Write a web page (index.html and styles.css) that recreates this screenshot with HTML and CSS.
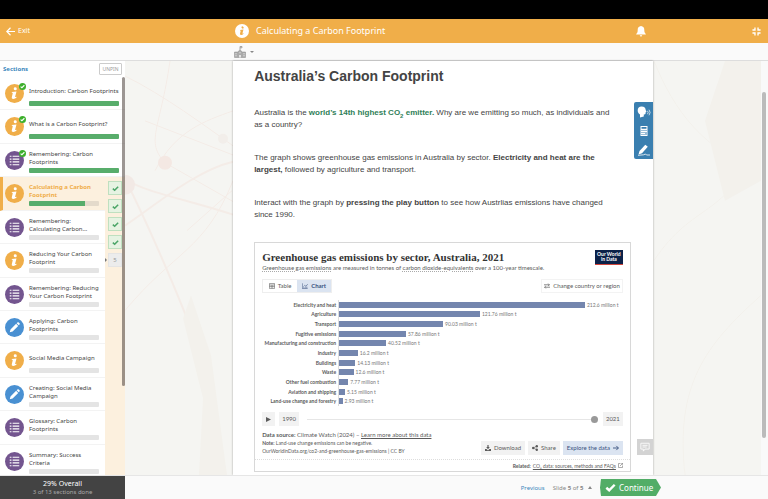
FILE: index.html
```html
<!DOCTYPE html>
<html lang="en">
<head>
    <meta charset="UTF-8">
    <title>Calculating a Carbon Footprint</title>
    <link rel="stylesheet" href="styles.css">
</head>
<body>
    <!-- shared icons -->
    <svg class="sprite" aria-hidden="true">
        <symbol id="info" viewBox="0 0 20 20">
            <path fill="currentColor" d="M9.2 4.800a1.600 1.600 0 1 1 3.200.4 1.600 1.600 0 0 1-3.200-.4zM7.200 8.400l4.900-.6-1.400 5.400c-.2.8.4.7 1.300.1l.3.7c-1.200 1.200-2.300 1.700-3.500 1.700-1.500 0-1.900-.9-1.600-2.100l.9-3.700c.1-.5 0-.6-1-.7z"/>
        </symbol>
        <symbol id="list" viewBox="0 0 20 20">
            <path fill="none" stroke="currentColor" stroke-width="1.200" d="M5 5.500h1.800M8 5.500h7M5 8.500h1.800M8 8.500h7M5 11.500h1.800M8 11.500h7M5 14.500h1.800M8 14.500h7"/>
        </symbol>
        <symbol id="pencil" viewBox="0 0 20 20">
            <path fill="currentColor" d="M5 15l.8-3 5.900-5.900 2.200 2.200L8 14.200zM12.300 5.500l.8-.8c.4-.4.900-.4 1.300 0l.9.9c.4.4.4.900 0 1.300l-.8.8z"/>
        </symbol>
        <symbol id="tick" viewBox="0 0 10 10">
            <path fill="none" stroke="currentColor" stroke-width="2.200" d="M1.200 5.200l2.600 2.300L8.800 2.500"/>
        </symbol>
    </svg>

    <div class="top-strip"></div>

    <header class="title-bar">
        <a class="exit" href="#">
            <svg viewBox="0 0 10 10"><path fill="none" stroke="currentColor" stroke-width="1.300" d="M10 5H1M5 .8L.9 5 5 9.200"/></svg>
            Exit
        </a>
        <span class="title-icon"><svg><use href="#info"/></svg></span>
        <span class="title">Calculating a Carbon Footprint</span>
        <button class="icon-button bell" aria-label="Notifications">
            <svg viewBox="0 0 10 12"><path fill="currentColor" d="M4.300 1.300a.8.8 0 0 1 1.400 0C7.600 1.700 8.300 3 8.300 5c0 2.500.5 3 1.500 4v.6H.2V9c1-1 1.500-1.500 1.500-4 0-2 .7-3.300 2.600-3.700zM3.800 10.200h2.400a1.200 1.200 0 0 1-2.400 0z"/></svg>
        </button>
        <button class="icon-button" aria-label="Exit full screen">
            <svg viewBox="0 0 10 10"><path fill="none" stroke="currentColor" stroke-width="1.500" d="M3.300.5v2.800H.5M6.700.5v2.800h2.800M3.300 9.500V6.700H.5M6.700 9.500V6.700h2.800"/></svg>
        </button>
    </header>

    <div class="tool-bar">
        <button class="school-button" aria-label="School">
            <svg viewBox="0 0 12 12"><path fill="#aaa" stroke="#888" stroke-width=".5" d="M.5 6h3L6 4l2.500 2h3v5.500h-11z"/><path fill="none" stroke="#888" stroke-width=".7" d="M6 4V.5h2v1.300H6"/><path fill="#f2f2f2" d="M5.200 9h1.600v2.500H5.200zM1.500 7.200h1v1h-1zM1.500 9.200h1v1h-1zM9.500 7.200h1v1h-1zM9.500 9.200h1v1h-1zM5.500 6.200h1v1h-1z"/></svg>
            <span class="caret"></span>
        </button>
    </div>

    <div class="workspace">
        <nav class="sidebar">
            <div class="sidebar-head">
                <h2>Sections</h2>
                <button class="unpin">UNPIN</button>
            </div>
            <div class="section-list">
                <a class="section wide" href="#">
                    <span class="badge info"><svg><use href="#info"/></svg><span class="done"><svg><use href="#tick"/></svg></span></span>
                    <span class="section-name">Introduction: Carbon Footprints</span>
                    <span class="progress full"></span>
                </a>
                <a class="section wide" href="#">
                    <span class="badge info"><svg><use href="#info"/></svg><span class="done"><svg><use href="#tick"/></svg></span></span>
                    <span class="section-name">What is a Carbon Footprint?</span>
                    <span class="progress full"></span>
                </a>
                <a class="section wide" href="#">
                    <span class="badge list"><svg><use href="#list"/></svg><span class="done"><svg><use href="#tick"/></svg></span></span>
                    <span class="section-name">Remembering: Carbon<br>Footprints</span>
                    <span class="progress full"></span>
                </a>
                <a class="section active" href="#">
                    <span class="badge info"><svg><use href="#info"/></svg></span>
                    <span class="section-name">Calculating a Carbon<br>Footprint</span>
                    <span class="progress"><span style="width: 80%"></span></span>
                </a>
                <div class="steps">
                    <a class="step" href="#" aria-label="Slide 1"><svg><use href="#tick"/></svg></a>
                    <a class="step" href="#" aria-label="Slide 2"><svg><use href="#tick"/></svg></a>
                    <a class="step" href="#" aria-label="Slide 3"><svg><use href="#tick"/></svg></a>
                    <a class="step" href="#" aria-label="Slide 4"><svg><use href="#tick"/></svg></a>
                    <a class="step current" href="#">5</a>
                </div>
                <a class="section" href="#">
                    <span class="badge list"><svg><use href="#list"/></svg></span>
                    <span class="section-name">Remembering:<br>Calculating Carbon…</span>
                    <span class="progress"></span>
                </a>
                <a class="section" href="#">
                    <span class="badge info"><svg><use href="#info"/></svg></span>
                    <span class="section-name">Reducing Your Carbon<br>Footprint</span>
                    <span class="progress"></span>
                </a>
                <a class="section" href="#">
                    <span class="badge list"><svg><use href="#list"/></svg></span>
                    <span class="section-name">Remembering: Reducing<br>Your Carbon Footprint</span>
                    <span class="progress"></span>
                </a>
                <a class="section" href="#">
                    <span class="badge pencil"><svg><use href="#pencil"/></svg></span>
                    <span class="section-name">Applying: Carbon<br>Footprints</span>
                    <span class="progress"></span>
                </a>
                <a class="section" href="#">
                    <span class="badge info"><svg><use href="#info"/></svg></span>
                    <span class="section-name">Social Media Campaign</span>
                    <span class="progress"></span>
                </a>
                <a class="section" href="#">
                    <span class="badge pencil"><svg><use href="#pencil"/></svg></span>
                    <span class="section-name">Creating: Social Media<br>Campaign</span>
                    <span class="progress"></span>
                </a>
                <a class="section" href="#">
                    <span class="badge list"><svg><use href="#list"/></svg></span>
                    <span class="section-name">Glossary: Carbon<br>Footprints</span>
                    <span class="progress"></span>
                </a>
                <a class="section" href="#">
                    <span class="badge list"><svg><use href="#list"/></svg></span>
                    <span class="section-name">Summary: Success<br>Criteria</span>
                    <span class="progress"></span>
                </a>
                <div class="list-scroll"></div>
            </div>
        </nav>

        <main class="stage">
            <svg class="backdrop" viewBox="0 0 643 415" preserveAspectRatio="none" aria-hidden="true">
                <g fill="none" stroke="#f4ece7">
                    <path stroke-width="2" d="M0 118c20 14 60 20 108 36M0 165c30-20 70-55 108-64M0 118c25 50 50 110 62 140"/>
                    <path d="M0 15c40 20 80 50 108 70M45 0c-10 70-25 80-5 102l70 40M20 60l90 35M0 250c50-60 80-60 108-130M62 170l45-40M30 110c20-40 50-50 78-60"/>
                </g>
                <path fill="none" stroke="#f3f1ec" d="M529 0c20 50 50 90 107 110M529 200c40-60 70-40 107-120M560 415c-10-90 20-130 76-180"/>
                <path fill="#f3f1ec" d="M58 258l20 80-4 77h28l-16-120-20-60zM600 0l-20 60 20 80 36-20V0z"/>
                <circle cx="0" cy="124" r="10" fill="#f2e9e5"/>
                <circle cx="40" cy="102" r="7" fill="#f4e8e3"/>
                <circle cx="98" cy="78" r="5" fill="#f2eeea"/>
            </svg>

            <article class="paper">
                <h1>Australia’s Carbon Footprint</h1>
                <p>Australia is the <strong class="green">world’s 14th highest CO<sub>2</sub> emitter.</strong> Why are we emitting so much, as individuals and as a country?</p>
                <p>The graph shows greenhouse gas emissions in Australia by sector. <strong>Electricity and heat are the largest,</strong> followed by agriculture and transport.</p>
                <p>Interact with the graph by <strong>pressing the play button</strong> to see how Austrlias emissions have changed since 1990.</p>

                <section class="chart">
                    <div class="chart-head">
                        <div>
                            <h2>Greenhouse gas emissions by sector, Australia, 2021</h2>
                            <div class="subtitle"><a href="#">Greenhouse gas emissions</a> are measured in tonnes of <a href="#">carbon dioxide-equivalents</a> over a 100-year timescale.</div>
                        </div>
                        <div class="owid">Our World<br>in Data</div>
                    </div>

                    <div class="chart-controls">
                        <div class="tabs">
                            <button><svg viewBox="0 0 10 10"><path fill="none" stroke="currentColor" d="M.5 1h9v8h-9zM.5 3.500h9M.5 6h9M5 3.500V9"/></svg>Table</button>
                            <button class="selected"><svg viewBox="0 0 10 10"><path fill="none" stroke="currentColor" d="M.5.5v9h9M2.500 6l2-2 2 1.500 3-3.500M3 9V7M5.500 9V7M8 9V6"/></svg>Chart</button>
                        </div>
                        <button class="region"><svg viewBox="0 0 10 10"><path fill="none" stroke="currentColor" stroke-width="1.200" d="M0 3h9M7 1l2 2-2 2M10 7H1M3 5L1 7l2 2"/></svg>Change country or region</button>
                    </div>

                    <div class="bars">
                        <div class="label">Electricity and heat</div><div class="track"><span class="bar" style="width: 100%"></span>212.6 million t</div>
                        <div class="label">Agriculture</div><div class="track"><span class="bar" style="width: 57.300%"></span>121.76 million t</div>
                        <div class="label">Transport</div><div class="track"><span class="bar" style="width: 42.300%"></span>90.03 million t</div>
                        <div class="label">Fugitive emissions</div><div class="track"><span class="bar" style="width: 27.200%"></span>57.86 million t</div>
                        <div class="label">Manufacturing and construction</div><div class="track"><span class="bar" style="width: 19.100%"></span>40.52 million t</div>
                        <div class="label">Industry</div><div class="track"><span class="bar" style="width: 7.600%"></span>16.2 million t</div>
                        <div class="label">Buildings</div><div class="track"><span class="bar" style="width: 6.600%"></span>14.13 million t</div>
                        <div class="label">Waste</div><div class="track"><span class="bar" style="width: 5.900%"></span>12.6 million t</div>
                        <div class="label">Other fuel combustion</div><div class="track"><span class="bar" style="width: 3.700%"></span>7.77 million t</div>
                        <div class="label">Aviation and shipping</div><div class="track"><span class="bar" style="width: 2.400%"></span>5.15 million t</div>
                        <div class="label">Land-use change and forestry</div><div class="track"><span class="bar" style="width: 1.400%"></span>2.93 million t</div>
                    </div>

                    <div class="timeline">
                        <button aria-label="Play"><svg viewBox="0 0 10 10"><path fill="currentColor" d="M0 0l10 5-10 5z"/></svg></button>
                        <span class="year">1990</span>
                        <input type="range" min="1990" max="2021" value="2021" aria-label="Year">
                        <span class="year">2021</span>
                    </div>

                    <div class="chart-foot">
                        <div class="source">
                            <b>Data source:</b> Climate Watch (2024) – <a href="#">Learn more about this data</a><br>
                            <small><b>Note:</b> Land-use change emissions can be negative.<br>
                            OurWorldinData.org/co2-and-greenhouse-gas-emissions | CC BY</small>
                        </div>
                        <div class="actions">
                            <button><svg viewBox="0 0 10 10"><path fill="currentColor" d="M4 0h2v3.500h2L5 7 2 3.500h2zM0 6.500h2.500L5 9l2.500-2.500H10V10H0z"/></svg>Download</button>
                            <button><svg viewBox="0 0 10 10"><path stroke="currentColor" fill="none" d="M8 2L2 5l6 3"/><g fill="currentColor"><circle cx="8" cy="2" r="2"/><circle cx="2" cy="5" r="2"/><circle cx="8" cy="8" r="2"/></g></svg>Share</button>
                            <button class="explore">Explore the data<svg viewBox="0 0 10 10"><path fill="none" stroke="currentColor" stroke-width="1.500" d="M0 5h9M5.500 1.500L9 5 5.500 8.500"/></svg></button>
                        </div>
                    </div>

                    <div class="related"><b>Related:</b> <a href="#">CO₂ data: sources, methods and FAQs</a> <svg viewBox="0 0 10 10"><path fill="none" stroke="currentColor" d="M5 1H1v8h8V5M4 6l5-5M6 .5h3.500V4"/></svg></div>
                </section>

                <div class="side-tools">
                    <button aria-label="Read aloud"><svg viewBox="0 0 14 12"><path fill="currentColor" d="M4.500.5c3 0 4.200 1.700 4.200 3.500l.8 2-.9.300c.1 1.700-.2 2.300-1.800 2.100v2.100L3 11.500V8.400C1.500 7.500.7 6 .7 4.400.7 2.200 2.200.5 4.500.5z"/><path fill="none" stroke="currentColor" stroke-width=".7" d="M10.500 4.800q1.300 1.700 0 3.400M12 3.700q2.200 2.800 0 5.600"/></svg></button>
                    <button aria-label="Calculator"><svg viewBox="0 0 14 12"><path fill="currentColor" d="M3.500 1h7v10h-7z"/><path fill="#3a7fb0" d="M4.500 2h5v1.800h-5zM4.500 5h1v1h-1zM6.500 5h1v1h-1zM8.500 5h1v1h-1zM4.500 7h1v1h-1zM6.500 7h1v1h-1zM8.500 7h1v3h-1zM4.500 9h1v1h-1zM6.500 9h1v1h-1z"/></svg></button>
                    <button aria-label="Annotate"><svg viewBox="0 0 14 12"><path fill="currentColor" d="M1.500 10.500l1-3.500L8.300.8l2.500 2L5 9.300z"/><path fill="none" stroke="currentColor" stroke-width=".8" d="M1 11.300l5.500-.5 2-.8 1 1h3.500"/></svg></button>
                </div>
                <button class="comment" aria-label="Comments"><svg viewBox="0 0 12 12"><path fill="none" stroke="currentColor" d="M1 1.500h10v7H6L4 11V8.500H1z"/><path stroke="currentColor" d="M3 4h6M3 6h5"/></svg></button>
            </article>
            <div class="page-scroll"></div>
        </main>
    </div>

    <footer class="bottom-bar">
        <div class="overall">
            <strong>29% Overall</strong>
            <span>3 of 13 sections done</span>
        </div>
        <div class="pager">
            <a href="#">Previous</a>
            <button class="slide-menu">Slide <b>5</b> of <b>5</b> <span class="caret up"></span></button>
            <button class="continue"><svg><use href="#tick"/></svg>Continue</button>
        </div>
    </footer>
</body>
</html>
```
FILE: styles.css
```css
* {
    box-sizing: border-box;
}
body {
    margin: 0;
    height: 100vh;
    display: flex;
    flex-direction: column;
    overflow: hidden;
    font-family: "Noto Sans", "Open Sans", sans-serif;
    font-size: 6px;
    line-height: 8px;
    color: #444;
    background: #fafafa;
}
h1, h2, p {
    margin: 0;
}
a {
    color: inherit;
    text-decoration: none;
}
button {
    margin: 0;
    padding: 0;
    border: none;
    background: transparent;
    font: inherit;
    color: inherit;
    cursor: pointer;
}
svg {
    display: block;
    flex: none;
}
.sprite {
    position: absolute;
    width: 0;
    height: 0;
}

/* bars on top */
.top-strip {
    flex: none;
    height: 19px;
    background: #000;
}
.title-bar {
    flex: none;
    height: 24px;
    display: flex;
    align-items: center;
    padding: 0 7px 0 6px;
    background: #f0ae49;
    color: #fff;
}
.exit {
    width: 229px;
    display: flex;
    align-items: center;
    gap: 3px;
    font-size: 7px;
}
.exit svg {
    width: 9px;
    height: 9px;
}
.title-icon {
    width: 14px;
    height: 14px;
    border-radius: 50%;
    background: #fff;
    color: #f0ae49;
}
.title-icon svg {
    width: 14px;
    height: 14px;
}
.title {
    flex: 1;
    margin-left: 7px;
    font-size: 9px;
}
.icon-button svg {
    width: 9px;
    height: 9px;
}
.bell {
    margin-right: 106px;
}
.bell svg {
    width: 10px;
    height: 12px;
}
.tool-bar {
    flex: none;
    height: 18px;
    display: flex;
    align-items: center;
    padding-left: 234px;
    background: #fafafa;
    border-bottom: 1px solid #ddd;
}
.school-button {
    display: flex;
    align-items: center;
    gap: 4px;
}
.school-button svg {
    width: 12px;
    height: 12px;
}
.caret {
    border: 2px solid transparent;
    border-top-color: #888;
    border-bottom: none;
}
.caret.up {
    display: inline-block;
    margin: 0 0 1px 3px;
    border-top: none;
    border-bottom: 3px solid #888;
}

/* sections */
.workspace {
    flex: 1;
    min-height: 0;
    display: flex;
}
.sidebar {
    flex: none;
    width: 125px;
    display: flex;
    flex-direction: column;
    background: #fff;
}
.sidebar-head {
    height: 16px;
    display: flex;
    align-items: center;
    justify-content: space-between;
    padding: 0 3px;
}
.sidebar-head h2 {
    font-size: 6px;
    color: #3a87bd;
}
.unpin {
    width: 23px;
    height: 12px;
    border: 1px solid #ccc;
    border-radius: 1px;
    font-size: 5px;
    color: #999;
}
.section-list {
    position: relative;
    flex: 1;
    margin-bottom: -3px;
    display: grid;
    grid-template-columns: 1fr 20px;
    grid-template-rows: repeat(12, 1fr);
}
.section {
    grid-column: 1;
    min-height: 0;
    display: grid;
    grid-template-columns: 19px 1fr;
    grid-template-rows: 20px 5px;
    column-gap: 5px;
    padding: 4px 6px 0 5px;
    border-bottom: 1px solid #f3f3f3;
    background: #fff;
}
.section.wide {
    grid-column: 1 / 3;
}
.section.active {
    padding-left: 2px;
    border-left: 3px solid #f0ae49;
    background: #fcf0de;
    color: #f0ae49;
    font-weight: bold;
}
.badge {
    position: relative;
    grid-row: 1 / 3;
    align-self: center;
    width: 19px;
    height: 19px;
    border-radius: 50%;
    color: #fff;
}
.badge > svg {
    width: 19px;
    height: 19px;
}
.badge.info {
    background: #f0ae49;
}
.badge.list {
    background: #73558f;
}
.badge.pencil {
    background: #4990d2;
}
.done {
    position: absolute;
    top: -1px;
    right: -2px;
    width: 7px;
    height: 7px;
    padding: 1px;
    border-radius: 50%;
    background: #3daf2c;
}
.done svg {
    width: 5px;
    height: 5px;
}
.section-name {
    align-self: center;
    white-space: nowrap;
}
.progress {
    grid-column: 2;
    display: block;
    height: 5px;
    border-radius: 1px;
    background: #e4e4e4;
    overflow: hidden;
}
.progress.full,
.progress span {
    background: #58ad6b;
}
.progress span {
    display: block;
    height: 5px;
}
.active .progress {
    background: #e4dacb;
}
.steps {
    grid-column: 2;
    grid-row: 4 / 13;
    display: flex;
    flex-direction: column;
    gap: 4px;
    padding: 4px 3px 0 3px;
    background: #fcf0de;
}
.step {
    position: relative;
    width: 14px;
    height: 14px;
    display: flex;
    align-items: center;
    justify-content: center;
    border: 1px solid #bfe0c0;
    background: #e6f3e2;
    color: #4ba567;
}
.step svg {
    width: 7px;
    height: 7px;
}
.step.current {
    border-color: #e4e4e4;
    background: #ececec;
    color: #999;
}
.step.current::before {
    content: "";
    position: absolute;
    left: -4px;
    border: 2px solid transparent;
    border-left-color: #777;
    border-right: none;
}
.list-scroll {
    position: absolute;
    top: 0;
    right: 0;
    width: 3px;
    height: 77%;
    border-radius: 2px;
    background: rgba(90, 80, 75, .6);
}

/* slide */
.stage {
    position: relative;
    flex: 1;
    display: flex;
    justify-content: center;
    padding-right: 7px;
    background: #f5f5f2;
}
.backdrop {
    position: absolute;
    inset: 0;
    width: 100%;
    height: 100%;
}
.page-scroll {
    position: absolute;
    top: 0;
    right: 0;
    bottom: 0;
    width: 7px;
    background: #f9f9f9;
}
.page-scroll::after {
    content: "";
    position: absolute;
    top: 31px;
    bottom: 37px;
    left: 1px;
    width: 4px;
    border-radius: 2px;
    background: #bbb;
}
.paper {
    position: relative;
    width: 66%;
    padding: 7px 22px 0 21px;
    background: #fff;
    box-shadow: 0 0 2px rgba(0, 0, 0, .35);
    font-family: "Liberation Sans", Arial, sans-serif;
}
.paper h1 {
    margin-bottom: 22px;
    font-size: 14px;
    line-height: 17px;
}
.paper p {
    margin-bottom: 21px;
    padding-right: 16px;
    font-size: 8px;
    line-height: 12px;
}
.paper sub {
    font-size: 6px;
    line-height: 0;
}
.green {
    color: #2f8058;
}

/* chart */
.chart {
    border: 1px solid #d8d8d8;
    padding: 7px 7px 0;
    font-family: Lato, sans-serif;
    color: #5b5b5b;
}
.chart-head {
    display: flex;
    justify-content: space-between;
}
.chart h2 {
    font-family: "Liberation Serif", serif;
    font-size: 11px;
    line-height: 14px;
    color: #333;
}
.subtitle {
    font-size: 6px;
}
.subtitle a {
    text-decoration: underline dotted #aaa;
}
.owid {
    width: 28px;
    height: 15px;
    padding-top: 2px;
    background: #0c2148;
    border-bottom: 1px solid #d0463c;
    color: #fff;
    font-size: 5px;
    line-height: 5px;
    font-weight: bold;
    text-align: center;
}
.chart button {
    display: flex;
    align-items: center;
    justify-content: center;
    gap: 3px;
}
.chart button svg {
    width: 6px;
    height: 6px;
}
.chart-controls {
    display: flex;
    justify-content: space-between;
    margin-top: 7px;
}
.tabs {
    display: flex;
    border: 1px solid #eee;
}
.tabs button {
    width: 34px;
    height: 12px;
}
.tabs .selected {
    background: #dbe4f1;
    color: #3a527f;
    font-weight: bold;
}
.region {
    padding: 0 2px;
    border: 1px solid #f3f3f3;
}
.bars {
    display: grid;
    grid-template-columns: 74px 1fr;
    grid-template-rows: repeat(11, 1fr);
    column-gap: 2px;
    height: 106px;
    margin-top: 7px;
    font-size: 5px;
}
.label {
    align-self: center;
    text-align: right;
    white-space: nowrap;
    font-weight: bold;
}
.track {
    display: flex;
    align-items: center;
    gap: 2px;
    padding-right: 38px;
    white-space: nowrap;
    color: #777;
    border-left: 1px solid #ddd;
}
.bar {
    flex: none;
    height: 6px;
    background: #7486ae;
}
.timeline {
    display: flex;
    align-items: center;
    margin-top: 6px;
}
.timeline button {
    width: 13px;
    height: 14px;
    margin-right: 4px;
    background: #f2f2f2;
}
.chart .timeline svg {
    width: 5px;
    height: 5px;
}
.year {
    width: 20px;
    background: #f2f2f2;
    line-height: 14px;
    text-align: center;
}
.timeline input {
    flex: 1;
    min-width: 0;
    height: 14px;
    margin: 0 5px 0 8px;
    appearance: none;
    background: linear-gradient(#e6e6e6, #e6e6e6) center / 100% 1px no-repeat;
}
.timeline input::-webkit-slider-thumb {
    appearance: none;
    width: 7px;
    height: 7px;
    border-radius: 50%;
    background: #999;
}
.chart-foot {
    display: flex;
    justify-content: space-between;
    margin-top: 5px;
}
.source a,
.related a {
    text-decoration: underline;
}
.source small {
    font-size: 5px;
}
.actions {
    display: flex;
    gap: 3px;
    margin-top: 10px;
}
.actions button {
    height: 14px;
    padding: 0 4px;
    background: #f2f2f2;
}
.actions .explore {
    background: #dbe4f1;
    color: #3a527f;
}
.related {
    display: flex;
    align-items: center;
    justify-content: flex-end;
    gap: 2px;
    height: 12px;
    margin: 4px -7px 0;
    padding-right: 7px;
    border-top: 1px dotted #ddd;
    font-size: 5px;
}
.related svg {
    width: 5px;
    height: 5px;
}

/* floating tools over the slide */
.side-tools {
    position: absolute;
    top: 41px;
    right: 0;
    width: 19px;
    border-radius: 2px 0 0 2px;
    background: #3a7fb0;
    color: #fff;
}
.side-tools button {
    display: block;
    height: 19px;
    padding-left: 3px;
}
.side-tools svg {
    width: 14px;
    height: 12px;
}
.comment {
    position: absolute;
    right: 0;
    bottom: 20px;
    width: 16px;
    height: 16px;
    padding: 3px;
    background: #d3d3d3;
    color: #fff;
}
.comment svg {
    width: 10px;
    height: 10px;
}

/* bottom */
.bottom-bar {
    flex: none;
    height: 24px;
    position: relative;
    display: flex;
    border-top: 1px solid #e6e6e6;
    background: #fafafa;
}
.overall {
    width: 125px;
    display: flex;
    flex-direction: column;
    align-items: center;
    justify-content: center;
    background: #434343;
    color: #aaa;
}
.overall strong {
    color: #fff;
    font-size: 7px;
    font-weight: normal;
}
.pager {
    flex: 1;
    display: flex;
    align-items: center;
    justify-content: flex-end;
    gap: 8px;
    padding-right: 107px;
    color: #888;
}
.pager a {
    color: #3a87bd;
}
.continue {
    width: 61px;
    height: 17px;
    display: flex;
    align-items: center;
    gap: 3px;
    padding-left: 5px;
    background: #52ad67;
    color: #fff;
    font-size: 8px;
    clip-path: polygon(1px 0, 56px 0, 100% 50%, 56px 100%, 1px 100%, 0 50%);
}
.continue svg {
    width: 11px;
    height: 11px;
}
```
